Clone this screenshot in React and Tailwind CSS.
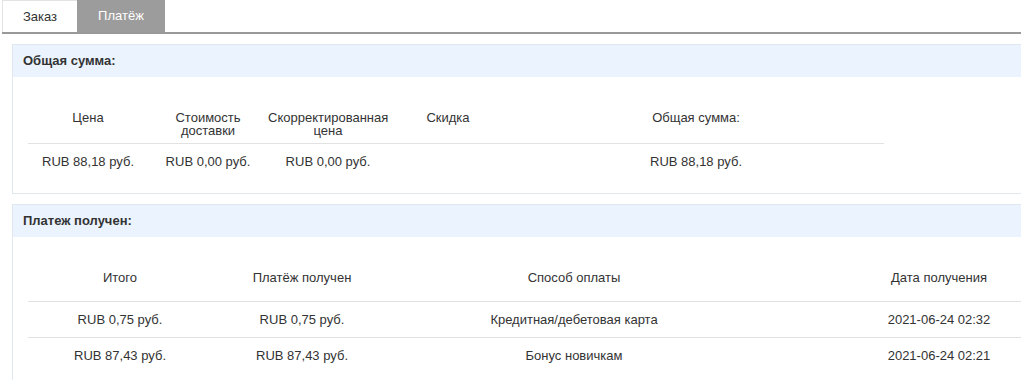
const orderCols = [
  { label: ["Цена"], value: "RUB 88,18 руб.", w: "w-[120px]" },
  { label: ["Стоимость", "доставки"], value: "RUB 0,00 руб.", w: "w-[120px]" },
  { label: ["Скорректированная", "цена"], value: "RUB 0,00 руб.", w: "w-[120px]" },
  { label: ["Скидка"], value: "", w: "w-[120px]" },
  { label: ["Общая сумма:"], value: "RUB 88,18 руб.", w: "w-[376px]" },
];

const payHead = [
  { label: "Итого", w: "w-[184px]" },
  { label: "Платёж получен", w: "w-[180px]" },
  { label: "Способ оплаты", w: "w-[364px]" },
  { label: "Дата получения", w: "w-[366px]" },
];

const payments = [
  ["RUB 0,75 руб.", "RUB 0,75 руб.", "Кредитная/дебетовая карта", "2021-06-24 02:32"],
  ["RUB 87,43 руб.", "RUB 87,43 руб.", "Бонус новичкам", "2021-06-24 02:21"],
];

const Panel = ({ title, children, className }) => (
  <div className={"ml-[12px] w-[1040px] border border-[#dfe7ef] bg-white " + (className || "")}>
    <div className="h-[32px] flex items-center px-[10px] bg-[#ebf3fe] font-bold text-[#333]">
      {title}
    </div>
    {children}
  </div>
);

export default function App() {
  return (
    <div
      className="w-[1021px] h-[380px] overflow-hidden bg-white text-[13px] text-[#333]"
      style={{ fontFamily: '"Liberation Sans", Arial, sans-serif' }}
    >
      {/* Tabs */}
      <div className="flex h-[34px] ml-[2px] border-b-2 border-[#999]">
        <div className="w-[75px] h-[32px] flex items-center justify-center border-l border-t border-[#e3e3e3] text-[#333]">
          Заказ
        </div>
        <div className="w-[88px] h-[32px] flex items-center justify-center bg-[#9c9c9c] text-white">
          Платёж
        </div>
      </div>

      {/* Total */}
      <Panel title="Общая сумма:" className="mt-[10px] h-[150px]">
        <div className="ml-[15px] mt-[34px] flex border-b border-[#e2e2e2] w-[856px]">
          {orderCols.map((c, i) => (
            <div key={i} className={c.w + " text-center leading-[13px] pb-[6px]"}>
              {c.label.map((l, j) => (
                <div key={j}>{l}</div>
              ))}
            </div>
          ))}
        </div>
        <div className="ml-[15px] flex w-[856px] h-[36px] items-center">
          {orderCols.map((c, i) => (
            <div key={i} className={c.w + " text-center"}>
              {c.value}
            </div>
          ))}
        </div>
      </Panel>

      {/* Payments */}
      <Panel title="Платеж получен:" className="mt-[10px] h-[200px]">
        <div className="ml-[15px] flex h-[65px] items-end pb-[14px] border-b border-[#e2e2e2] w-[1094px]">
          {payHead.map((c, i) => (
            <div key={i} className={c.w + " text-center"}>
              {c.label}
            </div>
          ))}
        </div>
        {payments.map((row, r) => (
          <div
            key={r}
            className={
              "ml-[15px] flex h-[36px] items-center w-[1094px] " +
              (r === 0 ? "border-b border-[#e2e2e2]" : "")
            }
          >
            {row.map((v, i) => (
              <div key={i} className={payHead[i].w + " text-center"}>
                {v}
              </div>
            ))}
          </div>
        ))}
      </Panel>
    </div>
  );
}
